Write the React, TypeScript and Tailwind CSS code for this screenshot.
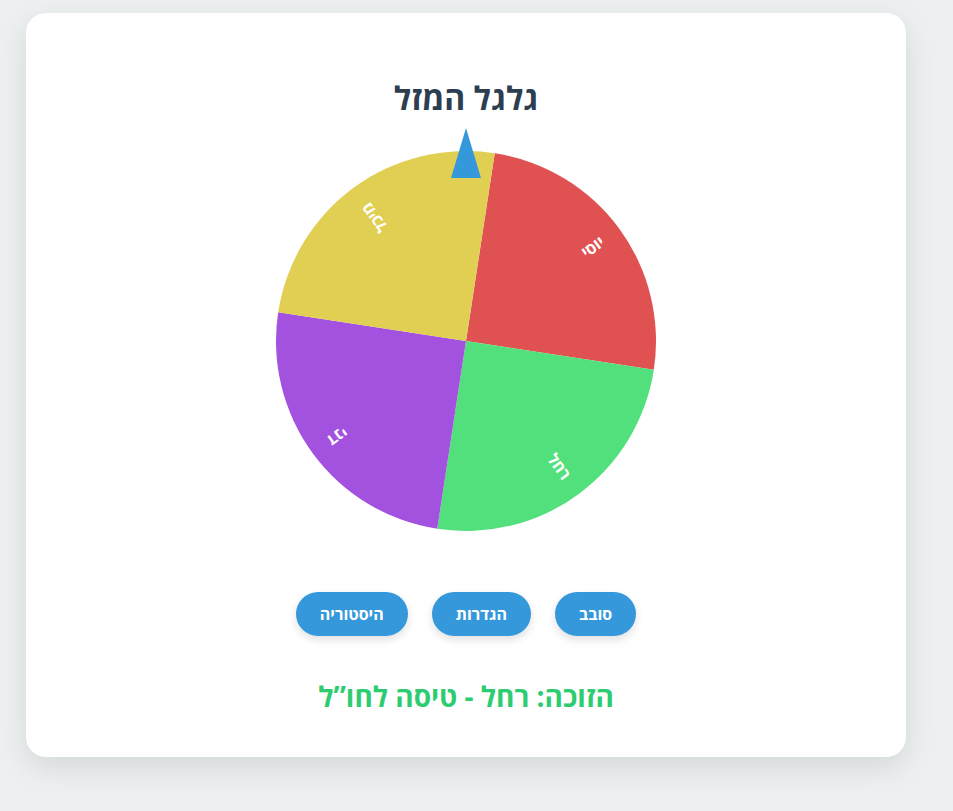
import React from "react";

const segments = [
  { name: "יוסי", color: "#e05252" },
  { name: "רחל", color: "#52e07c" },
  { name: "דני", color: "#a352e0" },
  { name: "מיכל", color: "#e0cf52" },
];

const SIZE = 380;
const R = SIZE / 2;
const OFFSET = 8.7;

function pt(deg: number, r: number) {
  const rad = (deg * Math.PI) / 180;
  return [R + r * Math.sin(rad), R - r * Math.cos(rad)];
}

function Wheel() {
  const arc = 360 / segments.length;
  return (
    <svg width={SIZE} height={SIZE} viewBox={`0 0 ${SIZE} ${SIZE}`} className="block">
      {segments.map((s, i) => {
        const start = OFFSET + i * arc;
        const end = start + arc;
        const [x1, y1] = pt(start, R);
        const [x2, y2] = pt(end, R);
        return (
          <path
            key={s.name}
            d={`M${R} ${R} L${x1} ${y1} A${R} ${R} 0 0 1 ${x2} ${y2} Z`}
            fill={s.color}
          />
        );
      })}
      {segments.map((s, i) => {
        const mid = OFFSET + i * arc + arc / 2;
        return (
          <g key={s.name + "-t"} transform={`rotate(${mid - 90} ${R} ${R})`}>
            <text
              x={R + 170}
              y={R + 5}
              textAnchor="end"
              direction="ltr"
              fill="#ffffff"
              fontSize="16"
              fontWeight="700"
              fontFamily="'Open Sans', 'DejaVu Sans', sans-serif"
            >
              {s.name}
            </text>
          </g>
        );
      })}
    </svg>
  );
}

export default function App() {
  return (
    <div
      className="min-h-[811px] bg-[#ecf0f1] pt-[13px] pl-[26px]"
      style={{ fontFamily: "'Open Sans', 'Noto Sans', 'DejaVu Sans', sans-serif" }}
    >
      <div
        dir="rtl"
        className="w-[880px] h-[744px] bg-white rounded-[20px] shadow-[0_10px_30px_rgba(0,0,0,0.1)] flex flex-col items-center"
      >
        <h1 className="mt-[66px] text-[32px] leading-[38px] font-bold text-[#2c3e50]">גלגל המזל</h1>

        <div className="relative mt-[34px] w-[380px] h-[380px]">
          <div className="absolute left-1/2 -translate-x-1/2 -top-[23px] z-10 w-0 h-0 border-l-[15px] border-r-[15px] border-b-[50px] border-l-transparent border-r-transparent border-b-[#3498db]" />
          <Wheel />
        </div>

        <div className="mt-[61px] flex gap-6">
          <button className="h-[44px] px-6 rounded-full bg-[#3498db] text-white font-bold text-base shadow-[0_4px_8px_rgba(0,0,0,0.12)]">
            סובב
          </button>
          <button className="h-[44px] px-6 rounded-full bg-[#3498db] text-white font-bold text-base shadow-[0_4px_8px_rgba(0,0,0,0.12)]">
            הגדרות
          </button>
          <button className="h-[44px] px-6 rounded-full bg-[#3498db] text-white font-bold text-base shadow-[0_4px_8px_rgba(0,0,0,0.12)]">
            היסטוריה
          </button>
        </div>

        <div className="mt-[42px] text-[28px] leading-[36px] font-bold text-[#2ecc71]">הזוכה: רחל - טיסה לחו”ל</div>
      </div>
    </div>
  );
}
